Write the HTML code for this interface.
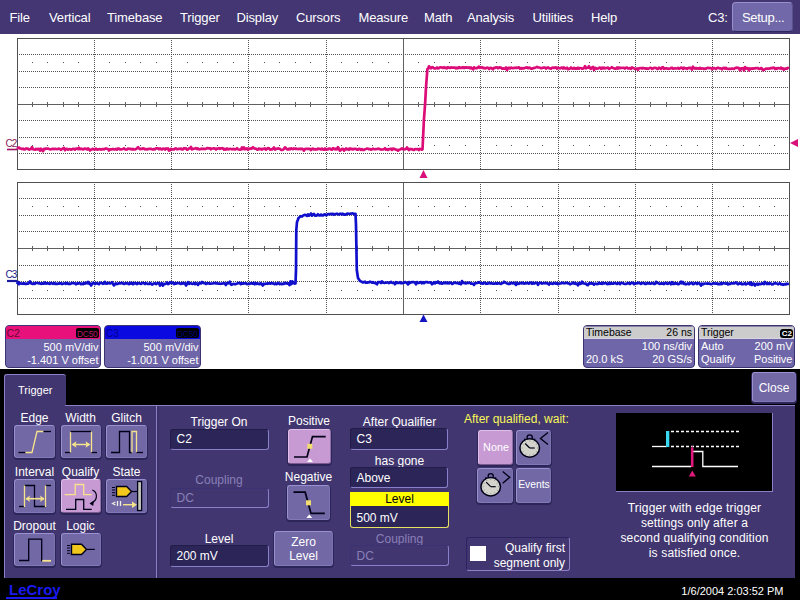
<!DOCTYPE html>
<html><head><meta charset="utf-8">
<style>
*{margin:0;padding:0;box-sizing:border-box}
html,body{width:800px;height:600px;overflow:hidden;background:#fff;font-family:"Liberation Sans", sans-serif;position:relative}
.a{position:absolute}
.t{position:absolute;white-space:nowrap;line-height:1}
.menu{position:absolute;left:0;top:0;width:800px;height:34px;background:#433672}
.mi{position:absolute;top:10px;font-size:13px;color:#fff;line-height:16px;letter-spacing:-0.15px}
.btn{position:absolute;background:#7068a8;border-radius:4px;border:1px solid #9890cc;border-right-color:#5a528e;border-bottom-color:#2e2860}
.info{position:absolute;background:#6e66a8;border:1px solid #3a3470;border-radius:4px;overflow:hidden}
.hdr{position:absolute;left:0;top:0;right:0;height:13px}
.fld{position:absolute;background:#2b2558;border:1px solid #8880c8;border-top-color:#221c48;border-left-color:#221c48;border-radius:3px}
.dfld{position:absolute;border:1px solid #8880c8;border-top-color:#3a3272;border-left-color:#3a3272;border-radius:3px}
.ib{position:absolute;background:#7268a6;border:1px solid #9a92d0;border-right-color:#7a72b0;border-bottom-color:#8078b8;border-radius:3px;box-shadow:0 1px 0 1px #2c2658}
</style></head><body>
<div class="menu">
<div class="mi" style="left:9.5px">File</div>
<div class="mi" style="left:49px">Vertical</div>
<div class="mi" style="left:107px">Timebase</div>
<div class="mi" style="left:180px">Trigger</div>
<div class="mi" style="left:236.5px">Display</div>
<div class="mi" style="left:296px">Cursors</div>
<div class="mi" style="left:358.5px">Measure</div>
<div class="mi" style="left:424px">Math</div>
<div class="mi" style="left:467px">Analysis</div>
<div class="mi" style="left:532.5px">Utilities</div>
<div class="mi" style="left:591px">Help</div>
<div class="mi" style="left:708px">C3:</div>
<div class="btn" style="left:732px;top:2px;width:61px;height:30px"></div>
<div class="mi" style="left:742px;letter-spacing:-0.3px">Setup...</div>
</div>
<svg width="800" height="325" style="position:absolute;left:0;top:0" shape-rendering="crispEdges">
<line x1="19" y1="54.5" x2="789" y2="54.5" stroke="#505050" stroke-width="1" stroke-dasharray="1 1"/>
<line x1="19" y1="71.5" x2="789" y2="71.5" stroke="#505050" stroke-width="1" stroke-dasharray="1 1"/>
<line x1="19" y1="87.5" x2="789" y2="87.5" stroke="#505050" stroke-width="1" stroke-dasharray="1 1"/>
<line x1="19" y1="120.5" x2="789" y2="120.5" stroke="#505050" stroke-width="1" stroke-dasharray="1 1"/>
<line x1="19" y1="137.5" x2="789" y2="137.5" stroke="#505050" stroke-width="1" stroke-dasharray="1 1"/>
<line x1="19" y1="153.5" x2="789" y2="153.5" stroke="#505050" stroke-width="1" stroke-dasharray="1 1"/>
<line x1="94.5" y1="40" x2="94.5" y2="169" stroke="#505050" stroke-width="1" stroke-dasharray="1 1"/>
<line x1="171.5" y1="40" x2="171.5" y2="169" stroke="#505050" stroke-width="1" stroke-dasharray="1 1"/>
<line x1="248.5" y1="40" x2="248.5" y2="169" stroke="#505050" stroke-width="1" stroke-dasharray="1 1"/>
<line x1="326.5" y1="40" x2="326.5" y2="169" stroke="#505050" stroke-width="1" stroke-dasharray="1 1"/>
<line x1="480.5" y1="40" x2="480.5" y2="169" stroke="#505050" stroke-width="1" stroke-dasharray="1 1"/>
<line x1="558.5" y1="40" x2="558.5" y2="169" stroke="#505050" stroke-width="1" stroke-dasharray="1 1"/>
<line x1="635.5" y1="40" x2="635.5" y2="169" stroke="#505050" stroke-width="1" stroke-dasharray="1 1"/>
<line x1="712.5" y1="40" x2="712.5" y2="169" stroke="#505050" stroke-width="1" stroke-dasharray="1 1"/>
<line x1="17" y1="104.5" x2="789" y2="104.5" stroke="#606060" stroke-width="1"/>
<line x1="403.5" y1="38" x2="403.5" y2="169" stroke="#606060" stroke-width="1"/>
<line x1="32.5" y1="102" x2="32.5" y2="107" stroke="#606060" stroke-width="1"/>
<rect x="32.0" y="62" width="1" height="1" fill="#505050"/>
<rect x="32.0" y="145" width="1" height="1" fill="#505050"/>
<line x1="47.5" y1="102" x2="47.5" y2="107" stroke="#606060" stroke-width="1"/>
<rect x="47.0" y="62" width="1" height="1" fill="#505050"/>
<rect x="47.0" y="145" width="1" height="1" fill="#505050"/>
<line x1="63.5" y1="102" x2="63.5" y2="107" stroke="#606060" stroke-width="1"/>
<rect x="63.0" y="62" width="1" height="1" fill="#505050"/>
<rect x="63.0" y="145" width="1" height="1" fill="#505050"/>
<line x1="78.5" y1="102" x2="78.5" y2="107" stroke="#606060" stroke-width="1"/>
<rect x="78.0" y="62" width="1" height="1" fill="#505050"/>
<rect x="78.0" y="145" width="1" height="1" fill="#505050"/>
<line x1="109.5" y1="102" x2="109.5" y2="107" stroke="#606060" stroke-width="1"/>
<rect x="109.0" y="62" width="1" height="1" fill="#505050"/>
<rect x="109.0" y="145" width="1" height="1" fill="#505050"/>
<line x1="125.5" y1="102" x2="125.5" y2="107" stroke="#606060" stroke-width="1"/>
<rect x="125.0" y="62" width="1" height="1" fill="#505050"/>
<rect x="125.0" y="145" width="1" height="1" fill="#505050"/>
<line x1="140.5" y1="102" x2="140.5" y2="107" stroke="#606060" stroke-width="1"/>
<rect x="140.0" y="62" width="1" height="1" fill="#505050"/>
<rect x="140.0" y="145" width="1" height="1" fill="#505050"/>
<line x1="156.5" y1="102" x2="156.5" y2="107" stroke="#606060" stroke-width="1"/>
<rect x="156.0" y="62" width="1" height="1" fill="#505050"/>
<rect x="156.0" y="145" width="1" height="1" fill="#505050"/>
<line x1="187.5" y1="102" x2="187.5" y2="107" stroke="#606060" stroke-width="1"/>
<rect x="187.0" y="62" width="1" height="1" fill="#505050"/>
<rect x="187.0" y="145" width="1" height="1" fill="#505050"/>
<line x1="202.5" y1="102" x2="202.5" y2="107" stroke="#606060" stroke-width="1"/>
<rect x="202.0" y="62" width="1" height="1" fill="#505050"/>
<rect x="202.0" y="145" width="1" height="1" fill="#505050"/>
<line x1="217.5" y1="102" x2="217.5" y2="107" stroke="#606060" stroke-width="1"/>
<rect x="217.0" y="62" width="1" height="1" fill="#505050"/>
<rect x="217.0" y="145" width="1" height="1" fill="#505050"/>
<line x1="233.5" y1="102" x2="233.5" y2="107" stroke="#606060" stroke-width="1"/>
<rect x="233.0" y="62" width="1" height="1" fill="#505050"/>
<rect x="233.0" y="145" width="1" height="1" fill="#505050"/>
<line x1="264.5" y1="102" x2="264.5" y2="107" stroke="#606060" stroke-width="1"/>
<rect x="264.0" y="62" width="1" height="1" fill="#505050"/>
<rect x="264.0" y="145" width="1" height="1" fill="#505050"/>
<line x1="279.5" y1="102" x2="279.5" y2="107" stroke="#606060" stroke-width="1"/>
<rect x="279.0" y="62" width="1" height="1" fill="#505050"/>
<rect x="279.0" y="145" width="1" height="1" fill="#505050"/>
<line x1="295.5" y1="102" x2="295.5" y2="107" stroke="#606060" stroke-width="1"/>
<rect x="295.0" y="62" width="1" height="1" fill="#505050"/>
<rect x="295.0" y="145" width="1" height="1" fill="#505050"/>
<line x1="310.5" y1="102" x2="310.5" y2="107" stroke="#606060" stroke-width="1"/>
<rect x="310.0" y="62" width="1" height="1" fill="#505050"/>
<rect x="310.0" y="145" width="1" height="1" fill="#505050"/>
<line x1="341.5" y1="102" x2="341.5" y2="107" stroke="#606060" stroke-width="1"/>
<rect x="341.0" y="62" width="1" height="1" fill="#505050"/>
<rect x="341.0" y="145" width="1" height="1" fill="#505050"/>
<line x1="357.5" y1="102" x2="357.5" y2="107" stroke="#606060" stroke-width="1"/>
<rect x="357.0" y="62" width="1" height="1" fill="#505050"/>
<rect x="357.0" y="145" width="1" height="1" fill="#505050"/>
<line x1="372.5" y1="102" x2="372.5" y2="107" stroke="#606060" stroke-width="1"/>
<rect x="372.0" y="62" width="1" height="1" fill="#505050"/>
<rect x="372.0" y="145" width="1" height="1" fill="#505050"/>
<line x1="388.5" y1="102" x2="388.5" y2="107" stroke="#606060" stroke-width="1"/>
<rect x="388.0" y="62" width="1" height="1" fill="#505050"/>
<rect x="388.0" y="145" width="1" height="1" fill="#505050"/>
<line x1="418.5" y1="102" x2="418.5" y2="107" stroke="#606060" stroke-width="1"/>
<rect x="418.0" y="62" width="1" height="1" fill="#505050"/>
<rect x="418.0" y="145" width="1" height="1" fill="#505050"/>
<line x1="434.5" y1="102" x2="434.5" y2="107" stroke="#606060" stroke-width="1"/>
<rect x="434.0" y="62" width="1" height="1" fill="#505050"/>
<rect x="434.0" y="145" width="1" height="1" fill="#505050"/>
<line x1="449.5" y1="102" x2="449.5" y2="107" stroke="#606060" stroke-width="1"/>
<rect x="449.0" y="62" width="1" height="1" fill="#505050"/>
<rect x="449.0" y="145" width="1" height="1" fill="#505050"/>
<line x1="465.5" y1="102" x2="465.5" y2="107" stroke="#606060" stroke-width="1"/>
<rect x="465.0" y="62" width="1" height="1" fill="#505050"/>
<rect x="465.0" y="145" width="1" height="1" fill="#505050"/>
<line x1="496.5" y1="102" x2="496.5" y2="107" stroke="#606060" stroke-width="1"/>
<rect x="496.0" y="62" width="1" height="1" fill="#505050"/>
<rect x="496.0" y="145" width="1" height="1" fill="#505050"/>
<line x1="511.5" y1="102" x2="511.5" y2="107" stroke="#606060" stroke-width="1"/>
<rect x="511.0" y="62" width="1" height="1" fill="#505050"/>
<rect x="511.0" y="145" width="1" height="1" fill="#505050"/>
<line x1="527.5" y1="102" x2="527.5" y2="107" stroke="#606060" stroke-width="1"/>
<rect x="527.0" y="62" width="1" height="1" fill="#505050"/>
<rect x="527.0" y="145" width="1" height="1" fill="#505050"/>
<line x1="542.5" y1="102" x2="542.5" y2="107" stroke="#606060" stroke-width="1"/>
<rect x="542.0" y="62" width="1" height="1" fill="#505050"/>
<rect x="542.0" y="145" width="1" height="1" fill="#505050"/>
<line x1="573.5" y1="102" x2="573.5" y2="107" stroke="#606060" stroke-width="1"/>
<rect x="573.0" y="62" width="1" height="1" fill="#505050"/>
<rect x="573.0" y="145" width="1" height="1" fill="#505050"/>
<line x1="589.5" y1="102" x2="589.5" y2="107" stroke="#606060" stroke-width="1"/>
<rect x="589.0" y="62" width="1" height="1" fill="#505050"/>
<rect x="589.0" y="145" width="1" height="1" fill="#505050"/>
<line x1="604.5" y1="102" x2="604.5" y2="107" stroke="#606060" stroke-width="1"/>
<rect x="604.0" y="62" width="1" height="1" fill="#505050"/>
<rect x="604.0" y="145" width="1" height="1" fill="#505050"/>
<line x1="619.5" y1="102" x2="619.5" y2="107" stroke="#606060" stroke-width="1"/>
<rect x="619.0" y="62" width="1" height="1" fill="#505050"/>
<rect x="619.0" y="145" width="1" height="1" fill="#505050"/>
<line x1="650.5" y1="102" x2="650.5" y2="107" stroke="#606060" stroke-width="1"/>
<rect x="650.0" y="62" width="1" height="1" fill="#505050"/>
<rect x="650.0" y="145" width="1" height="1" fill="#505050"/>
<line x1="666.5" y1="102" x2="666.5" y2="107" stroke="#606060" stroke-width="1"/>
<rect x="666.0" y="62" width="1" height="1" fill="#505050"/>
<rect x="666.0" y="145" width="1" height="1" fill="#505050"/>
<line x1="681.5" y1="102" x2="681.5" y2="107" stroke="#606060" stroke-width="1"/>
<rect x="681.0" y="62" width="1" height="1" fill="#505050"/>
<rect x="681.0" y="145" width="1" height="1" fill="#505050"/>
<line x1="697.5" y1="102" x2="697.5" y2="107" stroke="#606060" stroke-width="1"/>
<rect x="697.0" y="62" width="1" height="1" fill="#505050"/>
<rect x="697.0" y="145" width="1" height="1" fill="#505050"/>
<line x1="728.5" y1="102" x2="728.5" y2="107" stroke="#606060" stroke-width="1"/>
<rect x="728.0" y="62" width="1" height="1" fill="#505050"/>
<rect x="728.0" y="145" width="1" height="1" fill="#505050"/>
<line x1="743.5" y1="102" x2="743.5" y2="107" stroke="#606060" stroke-width="1"/>
<rect x="743.0" y="62" width="1" height="1" fill="#505050"/>
<rect x="743.0" y="145" width="1" height="1" fill="#505050"/>
<line x1="759.5" y1="102" x2="759.5" y2="107" stroke="#606060" stroke-width="1"/>
<rect x="759.0" y="62" width="1" height="1" fill="#505050"/>
<rect x="759.0" y="145" width="1" height="1" fill="#505050"/>
<line x1="774.5" y1="102" x2="774.5" y2="107" stroke="#606060" stroke-width="1"/>
<rect x="774.0" y="62" width="1" height="1" fill="#505050"/>
<rect x="774.0" y="145" width="1" height="1" fill="#505050"/>
<rect x="17.5" y="38.5" width="772" height="131" fill="none" stroke="#505050" stroke-width="1"/>
<line x1="19" y1="198.5" x2="789" y2="198.5" stroke="#505050" stroke-width="1" stroke-dasharray="1 1"/>
<line x1="19" y1="215.5" x2="789" y2="215.5" stroke="#505050" stroke-width="1" stroke-dasharray="1 1"/>
<line x1="19" y1="231.5" x2="789" y2="231.5" stroke="#505050" stroke-width="1" stroke-dasharray="1 1"/>
<line x1="19" y1="265.5" x2="789" y2="265.5" stroke="#505050" stroke-width="1" stroke-dasharray="1 1"/>
<line x1="19" y1="281.5" x2="789" y2="281.5" stroke="#505050" stroke-width="1" stroke-dasharray="1 1"/>
<line x1="19" y1="298.5" x2="789" y2="298.5" stroke="#505050" stroke-width="1" stroke-dasharray="1 1"/>
<line x1="94.5" y1="184" x2="94.5" y2="314" stroke="#505050" stroke-width="1" stroke-dasharray="1 1"/>
<line x1="171.5" y1="184" x2="171.5" y2="314" stroke="#505050" stroke-width="1" stroke-dasharray="1 1"/>
<line x1="248.5" y1="184" x2="248.5" y2="314" stroke="#505050" stroke-width="1" stroke-dasharray="1 1"/>
<line x1="326.5" y1="184" x2="326.5" y2="314" stroke="#505050" stroke-width="1" stroke-dasharray="1 1"/>
<line x1="480.5" y1="184" x2="480.5" y2="314" stroke="#505050" stroke-width="1" stroke-dasharray="1 1"/>
<line x1="558.5" y1="184" x2="558.5" y2="314" stroke="#505050" stroke-width="1" stroke-dasharray="1 1"/>
<line x1="635.5" y1="184" x2="635.5" y2="314" stroke="#505050" stroke-width="1" stroke-dasharray="1 1"/>
<line x1="712.5" y1="184" x2="712.5" y2="314" stroke="#505050" stroke-width="1" stroke-dasharray="1 1"/>
<line x1="17" y1="248.5" x2="789" y2="248.5" stroke="#606060" stroke-width="1"/>
<line x1="403.5" y1="182" x2="403.5" y2="314" stroke="#606060" stroke-width="1"/>
<line x1="32.5" y1="246" x2="32.5" y2="251" stroke="#606060" stroke-width="1"/>
<rect x="32.0" y="206" width="1" height="1" fill="#505050"/>
<rect x="32.0" y="290" width="1" height="1" fill="#505050"/>
<line x1="47.5" y1="246" x2="47.5" y2="251" stroke="#606060" stroke-width="1"/>
<rect x="47.0" y="206" width="1" height="1" fill="#505050"/>
<rect x="47.0" y="290" width="1" height="1" fill="#505050"/>
<line x1="63.5" y1="246" x2="63.5" y2="251" stroke="#606060" stroke-width="1"/>
<rect x="63.0" y="206" width="1" height="1" fill="#505050"/>
<rect x="63.0" y="290" width="1" height="1" fill="#505050"/>
<line x1="78.5" y1="246" x2="78.5" y2="251" stroke="#606060" stroke-width="1"/>
<rect x="78.0" y="206" width="1" height="1" fill="#505050"/>
<rect x="78.0" y="290" width="1" height="1" fill="#505050"/>
<line x1="109.5" y1="246" x2="109.5" y2="251" stroke="#606060" stroke-width="1"/>
<rect x="109.0" y="206" width="1" height="1" fill="#505050"/>
<rect x="109.0" y="290" width="1" height="1" fill="#505050"/>
<line x1="125.5" y1="246" x2="125.5" y2="251" stroke="#606060" stroke-width="1"/>
<rect x="125.0" y="206" width="1" height="1" fill="#505050"/>
<rect x="125.0" y="290" width="1" height="1" fill="#505050"/>
<line x1="140.5" y1="246" x2="140.5" y2="251" stroke="#606060" stroke-width="1"/>
<rect x="140.0" y="206" width="1" height="1" fill="#505050"/>
<rect x="140.0" y="290" width="1" height="1" fill="#505050"/>
<line x1="156.5" y1="246" x2="156.5" y2="251" stroke="#606060" stroke-width="1"/>
<rect x="156.0" y="206" width="1" height="1" fill="#505050"/>
<rect x="156.0" y="290" width="1" height="1" fill="#505050"/>
<line x1="187.5" y1="246" x2="187.5" y2="251" stroke="#606060" stroke-width="1"/>
<rect x="187.0" y="206" width="1" height="1" fill="#505050"/>
<rect x="187.0" y="290" width="1" height="1" fill="#505050"/>
<line x1="202.5" y1="246" x2="202.5" y2="251" stroke="#606060" stroke-width="1"/>
<rect x="202.0" y="206" width="1" height="1" fill="#505050"/>
<rect x="202.0" y="290" width="1" height="1" fill="#505050"/>
<line x1="217.5" y1="246" x2="217.5" y2="251" stroke="#606060" stroke-width="1"/>
<rect x="217.0" y="206" width="1" height="1" fill="#505050"/>
<rect x="217.0" y="290" width="1" height="1" fill="#505050"/>
<line x1="233.5" y1="246" x2="233.5" y2="251" stroke="#606060" stroke-width="1"/>
<rect x="233.0" y="206" width="1" height="1" fill="#505050"/>
<rect x="233.0" y="290" width="1" height="1" fill="#505050"/>
<line x1="264.5" y1="246" x2="264.5" y2="251" stroke="#606060" stroke-width="1"/>
<rect x="264.0" y="206" width="1" height="1" fill="#505050"/>
<rect x="264.0" y="290" width="1" height="1" fill="#505050"/>
<line x1="279.5" y1="246" x2="279.5" y2="251" stroke="#606060" stroke-width="1"/>
<rect x="279.0" y="206" width="1" height="1" fill="#505050"/>
<rect x="279.0" y="290" width="1" height="1" fill="#505050"/>
<line x1="295.5" y1="246" x2="295.5" y2="251" stroke="#606060" stroke-width="1"/>
<rect x="295.0" y="206" width="1" height="1" fill="#505050"/>
<rect x="295.0" y="290" width="1" height="1" fill="#505050"/>
<line x1="310.5" y1="246" x2="310.5" y2="251" stroke="#606060" stroke-width="1"/>
<rect x="310.0" y="206" width="1" height="1" fill="#505050"/>
<rect x="310.0" y="290" width="1" height="1" fill="#505050"/>
<line x1="341.5" y1="246" x2="341.5" y2="251" stroke="#606060" stroke-width="1"/>
<rect x="341.0" y="206" width="1" height="1" fill="#505050"/>
<rect x="341.0" y="290" width="1" height="1" fill="#505050"/>
<line x1="357.5" y1="246" x2="357.5" y2="251" stroke="#606060" stroke-width="1"/>
<rect x="357.0" y="206" width="1" height="1" fill="#505050"/>
<rect x="357.0" y="290" width="1" height="1" fill="#505050"/>
<line x1="372.5" y1="246" x2="372.5" y2="251" stroke="#606060" stroke-width="1"/>
<rect x="372.0" y="206" width="1" height="1" fill="#505050"/>
<rect x="372.0" y="290" width="1" height="1" fill="#505050"/>
<line x1="388.5" y1="246" x2="388.5" y2="251" stroke="#606060" stroke-width="1"/>
<rect x="388.0" y="206" width="1" height="1" fill="#505050"/>
<rect x="388.0" y="290" width="1" height="1" fill="#505050"/>
<line x1="418.5" y1="246" x2="418.5" y2="251" stroke="#606060" stroke-width="1"/>
<rect x="418.0" y="206" width="1" height="1" fill="#505050"/>
<rect x="418.0" y="290" width="1" height="1" fill="#505050"/>
<line x1="434.5" y1="246" x2="434.5" y2="251" stroke="#606060" stroke-width="1"/>
<rect x="434.0" y="206" width="1" height="1" fill="#505050"/>
<rect x="434.0" y="290" width="1" height="1" fill="#505050"/>
<line x1="449.5" y1="246" x2="449.5" y2="251" stroke="#606060" stroke-width="1"/>
<rect x="449.0" y="206" width="1" height="1" fill="#505050"/>
<rect x="449.0" y="290" width="1" height="1" fill="#505050"/>
<line x1="465.5" y1="246" x2="465.5" y2="251" stroke="#606060" stroke-width="1"/>
<rect x="465.0" y="206" width="1" height="1" fill="#505050"/>
<rect x="465.0" y="290" width="1" height="1" fill="#505050"/>
<line x1="496.5" y1="246" x2="496.5" y2="251" stroke="#606060" stroke-width="1"/>
<rect x="496.0" y="206" width="1" height="1" fill="#505050"/>
<rect x="496.0" y="290" width="1" height="1" fill="#505050"/>
<line x1="511.5" y1="246" x2="511.5" y2="251" stroke="#606060" stroke-width="1"/>
<rect x="511.0" y="206" width="1" height="1" fill="#505050"/>
<rect x="511.0" y="290" width="1" height="1" fill="#505050"/>
<line x1="527.5" y1="246" x2="527.5" y2="251" stroke="#606060" stroke-width="1"/>
<rect x="527.0" y="206" width="1" height="1" fill="#505050"/>
<rect x="527.0" y="290" width="1" height="1" fill="#505050"/>
<line x1="542.5" y1="246" x2="542.5" y2="251" stroke="#606060" stroke-width="1"/>
<rect x="542.0" y="206" width="1" height="1" fill="#505050"/>
<rect x="542.0" y="290" width="1" height="1" fill="#505050"/>
<line x1="573.5" y1="246" x2="573.5" y2="251" stroke="#606060" stroke-width="1"/>
<rect x="573.0" y="206" width="1" height="1" fill="#505050"/>
<rect x="573.0" y="290" width="1" height="1" fill="#505050"/>
<line x1="589.5" y1="246" x2="589.5" y2="251" stroke="#606060" stroke-width="1"/>
<rect x="589.0" y="206" width="1" height="1" fill="#505050"/>
<rect x="589.0" y="290" width="1" height="1" fill="#505050"/>
<line x1="604.5" y1="246" x2="604.5" y2="251" stroke="#606060" stroke-width="1"/>
<rect x="604.0" y="206" width="1" height="1" fill="#505050"/>
<rect x="604.0" y="290" width="1" height="1" fill="#505050"/>
<line x1="619.5" y1="246" x2="619.5" y2="251" stroke="#606060" stroke-width="1"/>
<rect x="619.0" y="206" width="1" height="1" fill="#505050"/>
<rect x="619.0" y="290" width="1" height="1" fill="#505050"/>
<line x1="650.5" y1="246" x2="650.5" y2="251" stroke="#606060" stroke-width="1"/>
<rect x="650.0" y="206" width="1" height="1" fill="#505050"/>
<rect x="650.0" y="290" width="1" height="1" fill="#505050"/>
<line x1="666.5" y1="246" x2="666.5" y2="251" stroke="#606060" stroke-width="1"/>
<rect x="666.0" y="206" width="1" height="1" fill="#505050"/>
<rect x="666.0" y="290" width="1" height="1" fill="#505050"/>
<line x1="681.5" y1="246" x2="681.5" y2="251" stroke="#606060" stroke-width="1"/>
<rect x="681.0" y="206" width="1" height="1" fill="#505050"/>
<rect x="681.0" y="290" width="1" height="1" fill="#505050"/>
<line x1="697.5" y1="246" x2="697.5" y2="251" stroke="#606060" stroke-width="1"/>
<rect x="697.0" y="206" width="1" height="1" fill="#505050"/>
<rect x="697.0" y="290" width="1" height="1" fill="#505050"/>
<line x1="728.5" y1="246" x2="728.5" y2="251" stroke="#606060" stroke-width="1"/>
<rect x="728.0" y="206" width="1" height="1" fill="#505050"/>
<rect x="728.0" y="290" width="1" height="1" fill="#505050"/>
<line x1="743.5" y1="246" x2="743.5" y2="251" stroke="#606060" stroke-width="1"/>
<rect x="743.0" y="206" width="1" height="1" fill="#505050"/>
<rect x="743.0" y="290" width="1" height="1" fill="#505050"/>
<line x1="759.5" y1="246" x2="759.5" y2="251" stroke="#606060" stroke-width="1"/>
<rect x="759.0" y="206" width="1" height="1" fill="#505050"/>
<rect x="759.0" y="290" width="1" height="1" fill="#505050"/>
<line x1="774.5" y1="246" x2="774.5" y2="251" stroke="#606060" stroke-width="1"/>
<rect x="774.0" y="206" width="1" height="1" fill="#505050"/>
<rect x="774.0" y="290" width="1" height="1" fill="#505050"/>
<rect x="17.5" y="182.5" width="772" height="132" fill="none" stroke="#505050" stroke-width="1"/>
</svg>
<svg width="800" height="325" style="position:absolute;left:0;top:0">
<polyline points="17.0,149.0 18.0,148.0 19.0,147.6 20.0,148.5 21.0,148.6 22.0,149.1 23.0,148.7 24.0,149.4 25.0,149.3 26.0,148.4 27.0,148.9 28.0,148.6 29.0,149.6 30.0,149.3 31.0,149.0 32.0,147.2 33.0,149.2 34.0,149.5 35.0,149.7 36.0,148.8 37.0,149.5 38.0,148.9 39.0,148.9 40.0,150.7 41.0,148.7 42.0,149.7 43.0,151.2 44.0,148.9 45.0,149.1 46.0,148.5 47.0,148.8 48.0,148.5 49.0,148.9 50.0,149.4 51.0,149.4 52.0,148.9 53.0,148.9 54.0,149.1 55.0,148.8 56.0,149.0 57.0,149.1 58.0,149.0 59.0,148.6 60.0,149.2 61.0,149.8 62.0,148.9 63.0,148.5 64.0,147.9 65.0,150.2 66.0,149.1 67.0,148.8 68.0,149.6 69.0,149.3 70.0,149.0 71.0,149.7 72.0,149.2 73.0,148.9 74.0,148.9 75.0,149.7 76.0,148.5 77.0,148.5 78.0,149.1 79.0,147.8 80.0,149.2 81.0,148.7 82.0,148.9 83.0,149.5 84.0,149.0 85.0,148.5 86.0,148.8 87.0,149.5 88.0,148.4 89.0,149.1 90.0,150.5 91.0,149.7 92.0,149.3 93.0,148.8 94.0,149.4 95.0,149.4 96.0,148.6 97.0,149.7 98.0,149.4 99.0,149.3 100.0,149.0 101.0,149.7 102.0,149.0 103.0,149.1 104.0,149.4 105.0,148.8 106.0,148.4 107.0,148.9 108.0,149.0 109.0,150.5 110.0,149.4 111.0,149.2 112.0,149.4 113.0,148.9 114.0,149.4 115.0,149.4 116.0,148.8 117.0,149.6 118.0,148.5 119.0,148.5 120.0,149.4 121.0,149.4 122.0,149.2 123.0,149.0 124.0,148.3 125.0,149.2 126.0,149.6 127.0,149.5 128.0,148.5 129.0,148.7 130.0,149.1 131.0,148.8 132.0,149.5 133.0,148.9 134.0,149.5 135.0,149.5 136.0,149.0 137.0,148.3 138.0,147.1 139.0,148.5 140.0,149.2 141.0,148.7 142.0,149.0 143.0,148.4 144.0,148.6 145.0,149.3 146.0,149.0 147.0,149.5 148.0,149.1 149.0,148.9 150.0,148.8 151.0,148.9 152.0,149.2 153.0,149.5 154.0,149.0 155.0,149.4 156.0,148.4 157.0,148.3 158.0,148.3 159.0,149.3 160.0,148.4 161.0,149.1 162.0,149.4 163.0,148.5 164.0,148.7 165.0,149.6 166.0,148.4 167.0,148.9 168.0,148.4 169.0,150.6 170.0,150.2 171.0,148.9 172.0,149.5 173.0,149.4 174.0,149.4 175.0,148.5 176.0,148.4 177.0,149.3 178.0,149.1 179.0,148.7 180.0,148.9 181.0,148.6 182.0,149.3 183.0,149.4 184.0,148.2 185.0,148.5 186.0,148.4 187.0,149.7 188.0,149.4 189.0,148.3 190.0,148.5 191.0,146.9 192.0,149.4 193.0,148.9 194.0,148.7 195.0,148.5 196.0,148.1 197.0,149.1 198.0,148.4 199.0,149.4 200.0,149.2 201.0,148.8 202.0,148.7 203.0,149.1 204.0,148.6 205.0,149.1 206.0,148.7 207.0,148.2 208.0,148.2 209.0,148.5 210.0,148.2 211.0,149.3 212.0,148.5 213.0,148.5 214.0,148.3 215.0,148.5 216.0,149.5 217.0,148.5 218.0,148.6 219.0,148.1 220.0,148.8 221.0,148.4 222.0,148.2 223.0,148.3 224.0,149.6 225.0,149.0 226.0,149.5 227.0,148.4 228.0,149.3 229.0,149.2 230.0,148.9 231.0,149.0 232.0,149.3 233.0,148.9 234.0,149.1 235.0,149.4 236.0,149.0 237.0,148.2 238.0,149.3 239.0,149.5 240.0,149.7 241.0,149.5 242.0,147.4 243.0,149.1 244.0,147.5 245.0,149.2 246.0,148.9 247.0,148.3 248.0,149.9 249.0,148.5 250.0,148.5 251.0,148.8 252.0,148.3 253.0,147.2 254.0,148.3 255.0,148.6 256.0,148.6 257.0,149.6 258.0,149.6 259.0,148.5 260.0,149.2 261.0,148.9 262.0,149.6 263.0,148.7 264.0,148.9 265.0,148.3 266.0,149.6 267.0,148.8 268.0,148.1 269.0,148.4 270.0,149.6 271.0,149.4 272.0,149.5 273.0,148.6 274.0,147.5 275.0,149.6 276.0,148.8 277.0,148.8 278.0,148.4 279.0,148.7 280.0,148.8 281.0,149.9 282.0,150.0 283.0,149.7 284.0,148.8 285.0,147.3 286.0,148.3 287.0,149.2 288.0,149.6 289.0,148.7 290.0,149.4 291.0,148.3 292.0,148.8 293.0,149.1 294.0,148.4 295.0,148.9 296.0,148.5 297.0,149.0 298.0,149.1 299.0,148.9 300.0,148.7 301.0,149.2 302.0,148.6 303.0,149.2 304.0,150.6 305.0,149.1 306.0,148.8 307.0,148.9 308.0,148.7 309.0,149.1 310.0,148.9 311.0,150.0 312.0,148.9 313.0,148.6 314.0,149.4 315.0,149.2 316.0,149.3 317.0,149.5 318.0,148.5 319.0,148.9 320.0,149.0 321.0,149.5 322.0,148.6 323.0,149.4 324.0,149.7 325.0,148.5 326.0,149.7 327.0,149.0 328.0,149.5 329.0,148.6 330.0,148.6 331.0,149.4 332.0,149.7 333.0,148.1 334.0,148.7 335.0,149.3 336.0,148.6 337.0,149.3 338.0,147.2 339.0,149.0 340.0,150.7 341.0,149.8 342.0,148.9 343.0,148.8 344.0,150.6 345.0,149.4 346.0,148.5 347.0,149.4 348.0,148.8 349.0,149.8 350.0,148.5 351.0,149.1 352.0,148.8 353.0,149.5 354.0,148.8 355.0,148.9 356.0,148.8 357.0,149.6 358.0,149.8 359.0,148.8 360.0,149.1 361.0,149.8 362.0,149.1 363.0,149.9 364.0,150.0 365.0,149.2 366.0,149.0 367.0,148.6 368.0,148.8 369.0,149.3 370.0,149.0 371.0,149.7 372.0,149.2 373.0,148.7 374.0,149.1 375.0,149.3 376.0,149.1 377.0,149.0 378.0,148.7 379.0,148.8 380.0,149.2 381.0,149.6 382.0,149.5 383.0,149.5 384.0,149.1 385.0,148.3 386.0,149.6 387.0,149.1 388.0,149.9 389.0,149.0 390.0,149.1 391.0,148.6 392.0,149.9 393.0,148.5 394.0,148.8 395.0,149.3 396.0,149.7 397.0,149.8 398.0,150.7 399.0,149.8 400.0,149.5 401.0,149.1 402.0,148.3 403.0,149.2 404.0,149.2 405.0,149.3 406.0,148.9 407.0,147.4 408.0,149.0 409.0,150.1 410.0,148.9 411.0,149.3 412.0,149.0 413.0,149.8 414.0,149.8 415.0,149.1 415.9,149.1 416.9,149.3 417.8,149.1 418.8,150.0 419.7,148.9 420.6,149.1 421.6,149.7 422.5,149.5 423.9,120.0 425.1,104.0 426.0,87.4 427.4,69.0 428.2,68.4 429.0,66.3 430.0,67.8 431.0,68.3 432.0,67.2 433.0,67.3 434.0,68.5 435.0,68.4 436.0,68.3 437.0,67.5 438.0,68.4 439.0,68.0 440.0,67.4 441.0,67.3 442.0,67.5 443.0,68.0 444.0,67.2 445.0,68.1 446.0,67.6 447.0,68.3 448.0,67.2 449.0,67.7 450.0,68.0 451.0,67.4 452.0,67.7 453.0,67.6 454.0,67.6 455.0,67.7 456.0,68.4 457.0,67.7 458.0,68.2 459.0,67.2 460.0,67.8 461.0,67.7 462.0,67.8 463.0,67.2 464.0,68.1 465.0,67.3 466.0,67.7 467.0,67.4 468.0,67.9 469.0,67.3 470.0,68.3 471.0,67.5 472.0,68.5 473.0,69.3 474.0,67.3 475.0,68.2 476.0,68.1 477.0,68.1 478.0,67.5 479.0,66.6 480.0,67.8 481.0,67.6 482.0,67.1 483.0,68.2 484.0,67.8 485.0,68.4 486.0,68.1 487.0,67.6 488.0,67.8 489.0,68.9 490.0,67.9 491.0,68.1 492.0,68.4 493.0,69.2 494.0,67.9 495.0,67.9 496.0,67.3 497.0,67.4 498.0,68.4 499.0,67.3 500.0,67.8 501.0,67.5 502.0,68.7 503.0,68.4 504.0,68.6 505.0,68.6 506.0,67.5 507.0,70.0 508.0,68.1 509.0,67.7 510.0,68.6 511.0,67.6 512.0,68.0 513.0,68.2 514.0,67.8 515.0,67.9 516.0,67.7 517.0,67.8 518.0,67.7 519.0,67.4 520.0,68.7 521.0,68.0 522.0,68.6 523.0,68.1 524.0,68.4 525.0,67.9 526.0,67.5 527.0,67.4 528.0,68.2 529.0,67.7 530.0,67.8 531.0,68.6 532.0,68.6 533.0,68.4 534.0,67.8 535.0,67.9 536.0,67.4 537.0,66.8 538.0,67.4 539.0,67.5 540.0,67.7 541.0,68.2 542.0,68.2 543.0,67.6 544.0,67.7 545.0,67.5 546.0,68.6 547.0,67.9 548.0,67.4 549.0,68.2 550.0,68.3 551.0,68.7 552.0,67.7 553.0,67.5 554.0,68.0 555.0,67.5 556.0,67.4 557.0,68.7 558.0,67.7 559.0,68.1 560.0,68.5 561.0,67.8 562.0,67.5 563.0,68.5 564.0,67.4 565.0,68.5 566.0,68.5 567.0,67.7 568.0,69.2 569.0,68.7 570.0,68.7 571.0,67.5 572.0,68.4 573.0,68.7 574.0,67.9 575.0,68.7 576.0,68.2 577.0,68.7 578.0,67.7 579.0,68.7 580.0,68.0 581.0,68.0 582.0,68.7 583.0,68.6 584.0,68.1 585.0,66.1 586.0,68.3 587.0,67.8 588.0,67.6 589.0,66.3 590.0,68.3 591.0,68.8 592.0,67.5 593.0,67.0 594.0,69.9 595.0,67.8 596.0,68.2 597.0,68.7 598.0,68.5 599.0,67.8 600.0,67.5 601.0,68.8 602.0,67.6 603.0,68.4 604.0,67.7 605.0,68.4 606.0,68.0 607.0,68.0 608.0,67.6 609.0,68.8 610.0,68.4 611.0,67.9 612.0,67.2 613.0,68.0 614.0,68.3 615.0,68.7 616.0,68.7 617.0,67.5 618.0,68.6 619.0,67.5 620.0,68.2 621.0,67.8 622.0,68.0 623.0,67.9 624.0,67.9 625.0,68.5 626.0,67.7 627.0,67.6 628.0,68.5 629.0,68.4 630.0,68.1 631.0,68.8 632.0,67.4 633.0,68.0 634.0,68.3 635.0,68.9 636.0,68.9 637.0,68.4 638.0,69.8 639.0,68.3 640.0,68.2 641.0,68.0 642.0,68.5 643.0,67.9 644.0,68.4 645.0,68.3 646.0,68.6 647.0,68.4 648.0,68.9 649.0,68.4 650.0,67.9 651.0,67.9 652.0,68.9 653.0,68.5 654.0,67.8 655.0,68.0 656.0,67.9 657.0,68.8 658.0,68.8 659.0,67.6 660.0,68.2 661.0,68.9 662.0,67.6 663.0,67.2 664.0,68.8 665.0,68.4 666.0,68.2 667.0,68.6 668.0,68.7 669.0,68.8 670.0,68.5 671.0,68.0 672.0,67.7 673.0,68.7 674.0,68.5 675.0,68.2 676.0,68.5 677.0,68.5 678.0,67.8 679.0,68.7 680.0,68.3 681.0,67.6 682.0,67.8 683.0,68.9 684.0,67.7 685.0,68.3 686.0,68.3 687.0,68.8 688.0,68.2 689.0,67.9 690.0,68.1 691.0,67.8 692.0,69.5 693.0,66.7 694.0,68.2 695.0,68.6 696.0,68.0 697.0,68.6 698.0,68.3 699.0,68.7 700.0,67.9 701.0,68.7 702.0,68.5 703.0,68.4 704.0,69.0 705.0,68.5 706.0,68.8 707.0,68.0 708.0,67.8 709.0,68.1 710.0,68.0 711.0,68.0 712.0,69.3 713.0,68.1 714.0,68.1 715.0,68.5 716.0,68.9 717.0,68.0 718.0,67.7 719.0,68.1 720.0,68.4 721.0,68.4 722.0,69.3 723.0,68.0 724.0,67.8 725.0,68.7 726.0,67.8 727.0,68.7 728.0,68.9 729.0,68.7 730.0,68.9 731.0,68.8 732.0,68.6 733.0,68.7 734.0,68.9 735.0,68.0 736.0,67.8 737.0,67.7 738.0,67.8 739.0,68.3 740.0,70.3 741.0,68.3 742.0,68.6 743.0,68.2 744.0,70.4 745.0,67.1 746.0,68.6 747.0,68.1 748.0,68.4 749.0,70.3 750.0,68.5 751.0,68.9 752.0,68.3 753.0,68.7 754.0,68.3 755.0,68.4 756.0,68.1 757.0,68.2 758.0,68.0 759.0,69.0 760.0,68.8 761.0,68.1 762.0,68.5 763.0,70.2 764.0,69.8 765.0,69.2 766.0,68.5 767.0,68.8 768.0,68.5 769.0,68.6 770.0,68.5 771.0,68.0 772.0,68.3 773.0,67.8 774.0,67.7 775.0,69.0 776.0,68.2 777.0,68.8 778.0,68.0 779.0,68.3 780.0,68.3 781.0,67.6 782.0,68.8 783.0,68.3 784.0,69.7 785.0,68.5 786.0,68.6 787.0,68.8 788.0,67.8 789.0,68.4" fill="none" stroke="#dc0c78" stroke-width="2.7" stroke-linejoin="round"/>
<polyline points="17.0,284.1 18.0,282.0 19.0,284.2 20.0,283.1 21.0,283.5 22.0,283.6 23.0,283.8 24.0,283.3 25.0,283.8 26.0,283.9 27.0,283.6 28.0,283.7 29.0,282.7 30.0,281.4 31.0,283.3 32.0,283.6 33.0,284.0 34.0,283.2 35.0,283.8 36.0,283.0 37.0,283.0 38.0,283.0 39.0,283.5 40.0,283.4 41.0,283.9 42.0,283.2 43.0,283.7 44.0,283.6 45.0,282.4 46.0,283.6 47.0,283.4 48.0,283.3 49.0,283.6 50.0,283.9 51.0,282.8 52.0,283.4 53.0,283.9 54.0,282.9 55.0,283.9 56.0,283.6 57.0,284.0 58.0,283.8 59.0,283.3 60.0,283.6 61.0,283.1 62.0,284.1 63.0,283.6 64.0,283.5 65.0,283.2 66.0,283.9 67.0,282.9 68.0,283.9 69.0,283.6 70.0,284.0 71.0,283.5 72.0,283.1 73.0,283.1 74.0,283.3 75.0,283.4 76.0,284.4 77.0,283.3 78.0,283.7 79.0,283.0 80.0,283.3 81.0,284.2 82.0,283.6 83.0,284.1 84.0,282.9 85.0,283.6 86.0,283.0 87.0,283.3 88.0,281.9 89.0,283.6 90.0,283.4 91.0,285.5 92.0,284.1 93.0,282.9 94.0,283.1 95.0,284.1 96.0,283.1 97.0,283.3 98.0,283.8 99.0,284.1 100.0,282.9 101.0,282.8 102.0,283.2 103.0,283.8 104.0,283.5 105.0,281.8 106.0,283.7 107.0,283.6 108.0,282.9 109.0,283.2 110.0,283.5 111.0,283.1 112.0,282.3 113.0,283.9 114.0,285.4 115.0,284.0 116.0,283.4 117.0,284.1 118.0,283.7 119.0,283.3 120.0,283.5 121.0,283.0 122.0,282.9 123.0,283.6 124.0,284.0 125.0,283.4 126.0,283.2 127.0,283.3 128.0,283.5 129.0,284.1 130.0,282.8 131.0,283.6 132.0,283.0 133.0,284.2 134.0,283.2 135.0,283.1 136.0,283.4 137.0,284.0 138.0,283.0 139.0,283.4 140.0,283.5 141.0,283.9 142.0,283.2 143.0,282.9 144.0,283.2 145.0,284.0 146.0,283.1 147.0,283.6 148.0,284.0 149.0,283.9 150.0,283.0 151.0,283.7 152.0,284.6 153.0,284.0 154.0,283.5 155.0,283.2 156.0,284.1 157.0,283.4 158.0,283.0 159.0,283.1 160.0,285.6 161.0,283.6 162.0,283.3 163.0,285.6 164.0,283.8 165.0,284.0 166.0,283.8 167.0,282.5 168.0,284.1 169.0,283.5 170.0,282.2 171.0,283.1 172.0,282.9 173.0,282.5 174.0,284.1 175.0,283.2 176.0,283.7 177.0,283.1 178.0,283.3 179.0,283.1 180.0,283.5 181.0,283.9 182.0,283.0 183.0,283.6 184.0,283.1 185.0,283.4 186.0,285.5 187.0,283.8 188.0,282.2 189.0,283.9 190.0,283.1 191.0,283.4 192.0,283.9 193.0,283.9 194.0,282.9 195.0,284.1 196.0,283.1 197.0,283.7 198.0,284.9 199.0,283.1 200.0,283.1 201.0,283.4 202.0,282.0 203.0,282.8 204.0,283.2 205.0,283.2 206.0,284.1 207.0,283.2 208.0,283.4 209.0,283.2 209.9,283.7 210.9,283.6 211.9,283.5 212.9,283.5 213.9,283.0 214.9,283.0 215.9,283.4 216.9,283.1 217.9,283.6 218.9,283.7 219.9,283.7 220.9,283.8 221.9,283.6 222.9,283.5 223.9,283.1 224.9,283.5 225.9,285.0 226.9,283.0 227.9,283.3 228.8,283.2 229.8,281.7 230.8,284.4 231.8,284.8 232.8,284.0 233.8,283.9 234.8,284.2 235.8,284.1 236.8,283.7 237.8,283.1 238.8,283.2 239.8,282.9 240.8,284.1 241.8,283.2 242.8,283.7 243.8,283.4 244.8,283.4 245.8,283.0 246.8,284.2 247.8,284.0 248.7,283.7 249.7,284.0 250.7,283.2 251.7,283.3 252.7,283.6 253.7,282.8 254.7,284.2 255.7,283.2 256.7,283.9 257.7,283.3 258.7,284.0 259.7,284.2 260.7,283.1 261.7,284.2 262.7,285.5 263.7,283.6 264.7,284.1 265.7,283.6 266.7,283.5 267.6,283.8 268.6,283.3 269.6,283.3 270.6,283.7 271.6,282.9 272.6,283.4 273.6,283.6 274.6,284.2 275.6,283.4 276.6,284.2 277.6,283.5 278.6,283.0 279.6,284.2 280.6,283.5 281.6,284.1 282.6,283.9 283.6,284.0 284.6,283.0 285.6,283.5 286.5,283.1 287.5,283.7 288.5,283.3 289.5,285.1 290.5,281.4 291.5,284.1 292.5,281.5 293.5,283.1 294.5,283.6 295.5,283.5 296.0,270.0 296.3,230.0 297.0,222.0 297.8,220.0 298.5,218.0 299.8,217.0 301.0,216.2 302.0,216.6 303.0,215.6 304.0,215.1 305.0,214.9 306.0,215.0 307.0,215.9 308.0,214.4 309.0,215.6 310.0,214.8 311.0,213.5 312.0,215.7 313.0,214.6 314.0,213.9 315.0,215.6 316.0,215.7 317.0,215.2 318.0,214.3 319.0,215.4 320.0,215.5 321.0,214.6 322.0,215.5 323.0,215.4 324.0,214.6 325.0,214.3 326.0,215.2 327.0,215.0 328.0,214.1 329.0,214.1 330.0,214.2 331.0,213.9 332.0,214.3 332.9,213.8 333.9,214.8 334.9,214.0 335.9,214.0 336.9,213.7 337.8,214.1 338.8,214.5 339.8,213.9 340.8,213.7 341.8,214.6 342.8,213.7 343.7,214.4 344.7,214.7 345.7,214.7 346.7,213.7 347.7,213.5 348.6,213.7 349.6,214.1 350.6,213.6 351.6,213.5 352.6,213.4 353.5,213.9 354.5,214.2 355.5,213.8 356.0,225.0 356.8,270.0 358.0,278.0 359.0,279.5 360.0,281.0 361.0,281.4 362.0,281.9 363.0,282.5 364.0,282.0 365.0,281.7 366.0,282.8 367.0,282.6 368.0,282.4 369.0,282.3 370.0,281.7 371.0,282.0 372.0,282.7 373.0,282.2 374.0,282.8 375.0,282.9 376.0,283.5 377.0,284.3 378.0,282.0 379.0,282.2 380.0,282.0 381.0,283.0 382.0,281.3 383.0,282.6 384.0,282.8 385.0,282.8 386.0,282.6 387.0,282.5 388.0,282.5 389.0,283.1 390.0,282.6 391.0,281.9 392.0,282.7 393.0,283.0 394.0,282.8 395.0,284.2 396.0,282.1 397.0,282.9 398.0,282.8 399.0,282.9 400.0,282.2 401.0,283.2 402.0,283.2 403.0,282.9 404.0,282.7 405.0,282.0 406.0,282.5 407.0,283.2 408.0,284.4 409.0,282.1 410.0,283.0 411.0,282.3 412.0,282.2 413.0,282.1 414.0,282.1 415.0,282.6 416.0,284.3 417.0,282.1 418.0,282.9 419.0,283.0 420.0,282.3 421.0,282.1 422.0,283.3 423.0,282.2 424.0,283.2 425.0,282.3 426.0,282.0 427.0,282.1 428.0,282.5 429.0,282.5 430.0,282.3 431.0,282.8 432.0,284.2 433.0,283.4 434.0,282.2 435.0,283.4 436.0,282.2 437.0,282.7 438.0,281.5 439.0,283.0 440.0,283.4 441.0,282.5 442.0,283.7 443.0,283.3 444.0,282.4 445.0,283.3 446.0,282.4 447.0,283.3 448.0,282.6 449.0,283.3 450.0,282.7 451.0,282.7 452.0,283.9 453.0,283.5 454.0,282.9 455.0,282.4 456.0,283.0 457.0,283.2 458.0,282.8 459.0,283.8 460.0,282.9 461.0,284.2 462.0,281.1 463.0,283.0 464.0,282.7 465.0,283.2 466.0,283.5 467.0,282.7 468.0,283.1 469.0,282.6 470.0,282.8 471.0,283.7 472.0,283.5 473.0,283.7 474.0,284.9 475.0,283.2 476.0,283.1 477.0,283.0 478.0,282.8 479.0,282.2 480.0,282.7 481.0,283.3 482.0,283.2 483.0,283.7 484.0,282.7 485.0,282.8 486.0,283.8 487.0,283.5 488.0,283.6 489.0,282.7 490.0,283.4 491.0,283.1 492.0,283.4 493.0,283.7 494.0,283.7 495.0,283.6 496.0,283.2 497.0,283.7 498.0,283.4 499.0,283.2 500.0,283.5 501.0,283.9 502.0,283.2 503.0,283.0 504.0,281.7 505.0,282.5 506.0,282.8 507.0,283.5 508.0,283.8 509.0,283.7 510.0,283.8 511.0,282.8 512.0,283.0 513.0,283.5 514.0,282.7 515.0,283.6 516.0,284.9 517.0,282.7 518.0,283.7 519.0,283.8 520.0,282.9 521.0,283.2 522.0,283.4 523.0,282.6 524.0,283.7 525.0,283.3 526.0,283.5 527.0,282.8 528.0,283.3 529.0,283.7 530.0,282.6 531.0,282.8 532.0,283.8 533.0,282.6 534.0,283.7 535.0,283.1 536.0,282.8 537.0,283.1 538.0,284.8 539.0,283.3 540.0,282.8 541.0,282.9 542.0,283.6 543.0,283.2 544.0,283.0 545.0,283.3 546.0,282.9 547.0,283.4 548.0,283.6 549.0,284.5 550.0,283.1 551.0,283.4 552.0,283.6 553.0,283.9 554.0,282.9 555.0,283.4 556.0,283.7 557.0,283.0 558.0,284.2 559.0,283.7 560.0,283.5 561.0,283.4 562.0,282.7 563.0,283.1 564.0,283.3 565.0,283.0 566.0,283.1 567.0,282.6 568.0,283.3 569.0,283.4 570.0,284.3 571.0,283.7 572.0,283.5 573.0,282.6 574.0,283.5 575.0,282.9 576.0,284.0 577.0,283.7 578.0,285.3 579.0,283.1 580.0,283.9 581.0,283.7 582.0,281.6 583.0,283.2 584.0,283.5 585.0,283.6 586.0,283.7 587.0,284.9 588.0,285.1 589.0,283.4 590.0,283.6 591.0,283.0 592.0,283.7 593.0,283.3 594.0,284.6 595.0,283.8 596.0,283.6 597.0,284.1 598.0,284.0 599.0,282.7 600.0,283.6 601.0,283.3 602.0,283.9 603.0,282.7 604.0,283.5 605.0,283.2 606.0,283.2 607.0,283.9 608.0,284.1 609.0,283.0 610.0,283.9 611.0,282.8 612.0,283.6 613.0,283.7 614.0,283.2 615.0,283.1 616.0,283.5 617.0,283.9 618.0,283.0 619.0,283.3 620.0,284.1 621.0,282.9 622.0,283.0 623.0,283.1 624.0,283.8 625.0,284.0 626.0,283.9 627.0,283.3 628.0,283.4 629.0,283.1 630.0,284.0 631.0,283.1 632.0,282.8 633.0,282.8 634.0,284.1 635.0,283.3 636.0,283.3 637.0,283.3 638.0,282.6 639.0,283.2 640.0,283.1 641.0,283.9 642.0,283.2 643.0,283.1 644.0,283.0 645.0,284.0 646.0,283.9 647.0,283.2 648.0,283.5 649.0,283.0 650.0,283.6 651.0,283.6 652.0,283.1 653.0,283.3 654.0,284.0 655.0,284.0 656.0,281.8 657.0,283.0 658.0,283.0 659.0,283.5 660.0,283.9 661.0,283.4 662.0,283.7 663.0,283.4 664.0,284.1 665.0,283.1 666.0,282.9 667.0,283.7 668.0,283.8 669.0,282.9 670.0,282.9 671.0,284.2 672.0,282.2 673.0,283.8 674.0,283.9 675.0,283.0 676.0,283.6 677.0,283.4 678.0,284.2 679.0,283.9 680.0,283.1 681.0,281.6 682.0,283.4 683.0,282.0 684.0,283.8 685.0,283.7 686.0,284.3 687.0,283.9 688.0,283.3 689.0,284.3 690.0,283.4 691.0,283.1 692.0,282.9 693.0,284.2 694.0,283.8 695.0,283.2 696.0,283.1 697.0,284.0 698.0,283.0 699.0,283.4 700.0,283.7 701.0,285.7 702.0,283.6 703.0,284.3 704.0,283.8 705.0,283.5 706.0,283.5 707.0,283.8 708.0,283.4 709.0,283.7 710.0,283.8 711.0,284.2 712.0,284.0 713.0,283.6 714.0,283.1 715.0,283.7 716.0,283.7 717.0,283.3 718.0,284.1 719.0,283.9 720.0,284.2 721.0,283.0 722.0,284.1 723.0,283.1 724.0,283.3 725.0,283.5 726.0,283.7 727.0,283.1 728.0,284.4 729.0,283.6 730.0,284.1 731.0,283.2 732.0,283.5 733.0,283.3 734.0,283.5 735.0,283.0 736.0,282.4 737.0,283.4 738.0,284.3 739.0,283.4 740.0,283.7 741.0,283.1 742.0,284.3 743.0,284.1 744.0,284.0 745.0,283.1 746.0,284.4 747.0,283.9 748.0,283.3 749.0,283.2 750.0,284.4 751.0,282.4 752.0,284.9 753.0,283.6 754.0,283.7 755.0,285.5 756.0,284.3 757.0,283.6 758.0,284.7 759.0,283.7 760.0,284.2 761.0,284.1 762.0,283.1 763.0,283.8 764.0,284.1 765.0,282.0 766.0,283.2 767.0,284.1 768.0,283.1 769.0,284.1 770.0,283.1 771.0,283.6 772.0,284.5 773.0,284.3 774.0,283.5 775.0,283.1 776.0,283.5 777.0,283.5 778.0,284.3 779.0,283.8 780.0,283.2 781.0,284.3 782.0,284.3 783.0,284.8 784.0,284.4 785.0,284.1 786.0,284.4 787.0,283.7 788.0,284.0 789.0,283.8" fill="none" stroke="#1010cc" stroke-width="2.7" stroke-linejoin="round"/>
<line x1="7" y1="149.5" x2="17" y2="149.5" stroke="#a01060" stroke-width="1.6"/>
<line x1="7" y1="281" x2="17" y2="281" stroke="#1a1aa0" stroke-width="2.2"/>
<polygon points="419.5,178 427.5,178 423.5,170" fill="#d8107a"/>
<polygon points="419.5,322 427.5,322 423.5,314.5" fill="#1414c0"/>
<polygon points="790,143 798,139 798,147" fill="#d8107a"/>
<text x="5.5" y="146.8" font-family='"Liberation Sans", sans-serif' font-size="10" letter-spacing="-1" fill="#8a1a5a">C2</text>
<text x="5.5" y="277.5" font-family='"Liberation Sans", sans-serif' font-size="10" letter-spacing="-1" fill="#20208a">C3</text>
</svg>
<div class="info" style="left:5px;top:325px;width:96px;height:43px"><div class="hdr" style="background:#e8107a"></div></div>
<div class="t" style="left:6.5px;top:328.11px;font-size:10.5px;color:#6a0a34;">C2</div>
<div class="a" style="left:76px;top:328px;width:23px;height:10px;background:#000;border-radius:2px"></div>
<div class="t" style="left:-202.5px;width:300px;text-align:right;top:329.80px;font-size:8.5px;color:#b81868;letter-spacing:-0.3px">DC50</div>
<div class="t" style="left:-201.5px;width:300px;text-align:right;top:341.69px;font-size:11px;color:#fff;">500 mV/div</div>
<div class="t" style="left:-201.5px;width:300px;text-align:right;top:354.69px;font-size:11px;color:#fff;">-1.401 V offset</div>
<div class="info" style="left:104px;top:325px;width:97px;height:43px"><div class="hdr" style="background:#0a0ae0"></div></div>
<div class="t" style="left:106px;top:329.04px;font-size:10px;color:#000090;">C3</div>
<div class="a" style="left:176px;top:328px;width:23px;height:10px;background:#000;border-radius:2px"></div>
<div class="t" style="left:-102.5px;width:300px;text-align:right;top:329.80px;font-size:8.5px;color:#000070;letter-spacing:-0.3px">DC50</div>
<div class="t" style="left:-101.5px;width:300px;text-align:right;top:341.69px;font-size:11px;color:#fff;">500 mV/div</div>
<div class="t" style="left:-101.5px;width:300px;text-align:right;top:354.69px;font-size:11px;color:#fff;">-1.001 V offset</div>
<div class="info" style="left:583px;top:325px;width:112px;height:43px"><div class="hdr" style="background:#cccccc;border-top:1px solid #8a82a8;border-bottom:1px solid #d8d4e4"></div></div>
<div class="t" style="left:586px;top:327.11px;font-size:10.5px;color:#000;">Timebase</div>
<div class="t" style="left:392px;width:300px;text-align:right;top:327.11px;font-size:10.5px;color:#000;">26 ns</div>
<div class="t" style="left:392px;width:300px;text-align:right;top:341.19px;font-size:11px;color:#fff;">100 ns/div</div>
<div class="t" style="left:586px;top:354.19px;font-size:11px;color:#fff;">20.0 kS</div>
<div class="t" style="left:392px;width:300px;text-align:right;top:354.19px;font-size:11px;color:#fff;">20 GS/s</div>
<div class="info" style="left:698px;top:325px;width:97px;height:43px"><div class="hdr" style="background:#cccccc;border-top:1px solid #8a82a8;border-bottom:1px solid #d8d4e4"></div></div>
<div class="t" style="left:701px;top:327.11px;font-size:10.5px;color:#000;">Trigger</div>
<div class="a" style="left:780px;top:329px;width:13px;height:9px;background:#000;border-radius:3px"></div>
<div class="t" style="left:492px;width:300px;text-align:right;top:330.23px;font-size:8px;color:#fff;font-weight:bold">C2</div>
<div class="t" style="left:701px;top:341.19px;font-size:11px;color:#fff;">Auto</div>
<div class="t" style="left:492.5px;width:300px;text-align:right;top:341.19px;font-size:11px;color:#fff;">200 mV</div>
<div class="t" style="left:701px;top:353.69px;font-size:11px;color:#fff;">Qualify</div>
<div class="t" style="left:492.5px;width:300px;text-align:right;top:353.69px;font-size:11px;color:#fff;">Positive</div>
<div class="a" style="left:0;top:369px;width:800px;height:231px;background:#000"></div>
<div class="a" style="left:4px;top:374px;width:62px;height:40px;background:#423670;border-top:1px solid #8a82c4;border-left:1px solid #8a82c4;border-radius:3px 3px 0 0"></div>
<div class="a" style="left:4px;top:405px;width:791px;height:173px;background:#423670;border-top:1px solid #8a82c4;border-left:1px solid #8a82c4"></div>
<div class="a" style="left:5px;top:405px;width:60px;height:4px;background:#423670"></div>
<div class="t" style="left:18px;top:384.69px;font-size:11px;color:#fff;">Trigger</div>
<div class="ib" style="left:752px;top:372px;width:44px;height:30px;"></div>
<div class="t" style="left:624px;width:300px;text-align:center;top:381.84px;font-size:12px;color:#fff;">Close</div>
<div class="a" style="left:156px;top:406px;width:1px;height:172px;background:#8a82c4"></div>
<div class="a" style="left:157px;top:406px;width:2px;height:172px;background:#3a306a"></div>
<div class="t" style="left:-115.5px;width:300px;text-align:center;top:411.84px;font-size:12px;color:#fff;">Edge</div>
<div class="t" style="left:-69.5px;width:300px;text-align:center;top:411.84px;font-size:12px;color:#fff;">Width</div>
<div class="t" style="left:-23.5px;width:300px;text-align:center;top:411.84px;font-size:12px;color:#fff;">Glitch</div>
<div class="t" style="left:-115.5px;width:300px;text-align:center;top:466.34px;font-size:12px;color:#fff;">Interval</div>
<div class="t" style="left:-69.5px;width:300px;text-align:center;top:466.34px;font-size:12px;color:#fff;">Qualify</div>
<div class="t" style="left:-23.5px;width:300px;text-align:center;top:466.34px;font-size:12px;color:#fff;">State</div>
<div class="t" style="left:-115.5px;width:300px;text-align:center;top:520.34px;font-size:12px;color:#fff;">Dropout</div>
<div class="t" style="left:-69.5px;width:300px;text-align:center;top:520.34px;font-size:12px;color:#fff;">Logic</div>
<div class="ib" style="left:14px;top:425px;width:41px;height:33px;"></div>
<div class="ib" style="left:61px;top:425px;width:40px;height:33px;"></div>
<div class="ib" style="left:106px;top:425px;width:41px;height:33px;"></div>
<div class="ib" style="left:14px;top:479px;width:41px;height:34px;"></div>
<div class="ib" style="left:61px;top:479px;width:40px;height:34px;background:#c89ad4;border-color:#e0c0e8 #9070a8 #7a5a90 #e0c0e8;"></div>
<div class="ib" style="left:106px;top:479px;width:41px;height:34px;"></div>
<div class="ib" style="left:14px;top:533px;width:41px;height:33px;"></div>
<div class="ib" style="left:61px;top:533px;width:40px;height:33px;"></div>
<div class="t" style="left:69px;width:300px;text-align:center;top:415.84px;font-size:12px;color:#fff;">Trigger On</div>
<div class="fld" style="left:170px;top:429px;width:99px;height:21px;"></div>
<div class="t" style="left:176.5px;top:432.84px;font-size:12px;color:#fff;">C2</div>
<div class="t" style="left:69px;width:300px;text-align:center;top:474.34px;font-size:12px;color:#8880b8;">Coupling</div>
<div class="dfld" style="left:170px;top:488px;width:99px;height:20px;"></div>
<div class="t" style="left:176.5px;top:491.84px;font-size:12px;color:#8880b8;">DC</div>
<div class="t" style="left:69px;width:300px;text-align:center;top:532.84px;font-size:12px;color:#fff;">Level</div>
<div class="fld" style="left:170px;top:545px;width:99px;height:22px;"></div>
<div class="t" style="left:176.5px;top:549.84px;font-size:12px;color:#fff;">200 mV</div>
<div class="t" style="left:159px;width:300px;text-align:center;top:414.84px;font-size:12px;color:#fff;">Positive</div>
<div class="ib" style="left:288px;top:429px;width:43px;height:35px;background:#c89ad4;border-color:#e0c0e8 #9070a8 #7a5a90 #e0c0e8;"></div>
<div class="t" style="left:158.5px;width:300px;text-align:center;top:470.84px;font-size:12px;color:#fff;">Negative</div>
<div class="ib" style="left:287px;top:485px;width:43px;height:35px;"></div>
<div class="ib" style="left:274px;top:531px;width:59px;height:35px;"></div>
<div class="t" style="left:153.5px;width:300px;text-align:center;top:535.84px;font-size:12px;color:#fff;">Zero</div>
<div class="t" style="left:153.5px;width:300px;text-align:center;top:550.34px;font-size:12px;color:#fff;">Level</div>
<div class="t" style="left:249.5px;width:300px;text-align:center;top:415.84px;font-size:12px;color:#fff;">After Qualifier</div>
<div class="fld" style="left:350px;top:428px;width:98px;height:22px;"></div>
<div class="t" style="left:356.5px;top:432.84px;font-size:12px;color:#fff;">C3</div>
<div class="t" style="left:249.5px;width:300px;text-align:center;top:454.84px;font-size:12px;color:#fff;">has gone</div>
<div class="fld" style="left:350px;top:467px;width:98px;height:21px;"></div>
<div class="t" style="left:356.5px;top:471.84px;font-size:12px;color:#fff;">Above</div>
<div class="a" style="left:350px;top:492px;width:99px;height:36px;background:#2b2558;border:1px solid #e8e060;border-top:none;border-radius:0 0 3px 3px"></div>
<div class="a" style="left:350px;top:492px;width:99px;height:14px;background:#ffff00"></div>
<div class="t" style="left:249.5px;width:300px;text-align:center;top:493.34px;font-size:12px;color:#000;">Level</div>
<div class="t" style="left:356.5px;top:511.84px;font-size:12px;color:#fff;">500 mV</div>
<div class="t" style="left:249.5px;width:300px;text-align:center;top:532.84px;font-size:12px;color:#8880b8;">Coupling</div>
<div class="dfld" style="left:350px;top:545px;width:99px;height:21px;"></div>
<div class="t" style="left:356.5px;top:549.84px;font-size:12px;color:#8880b8;">DC</div>
<div class="t" style="left:464px;top:413.14px;font-size:12px;color:#f8f858;">After qualified, wait:</div>
<div class="ib" style="left:478px;top:430px;width:35px;height:35px;background:#c89ad4;border-color:#e0c0e8 #9070a8 #7a5a90 #e0c0e8;"></div>
<div class="t" style="left:346px;width:300px;text-align:center;top:442.36px;font-size:10.8px;color:#fff;">None</div>
<div class="ib" style="left:516px;top:430px;width:35px;height:35px;"></div>
<div class="ib" style="left:477px;top:468px;width:36px;height:35px;"></div>
<div class="ib" style="left:516px;top:468px;width:35px;height:35px;"></div>
<div class="t" style="left:384px;width:300px;text-align:center;top:480.28px;font-size:10.3px;color:#fff;">Events</div>
<div class="a" style="left:466px;top:537px;width:104px;height:34px;border:1px solid #8a82c4;border-top-color:#2c2460;border-left-color:#2c2460;border-radius:3px"></div>
<div class="a" style="left:470px;top:546px;width:16px;height:15px;background:#fff"></div>
<div class="t" style="left:265px;width:300px;text-align:right;top:541.84px;font-size:12px;color:#fff;">Qualify first</div>
<div class="t" style="left:265px;width:300px;text-align:right;top:556.84px;font-size:12px;color:#fff;">segment only</div>
<div class="a" style="left:616px;top:413px;width:157px;height:79px;background:#000;border-right:1px solid #8a82c4;border-bottom:1px solid #8a82c4"></div>
<div class="t" style="left:544.5px;width:300px;text-align:center;top:501.84px;font-size:12px;color:#fff;letter-spacing:0.15px">Trigger with edge trigger</div>
<div class="t" style="left:544.5px;width:300px;text-align:center;top:516.84px;font-size:12px;color:#fff;letter-spacing:0.15px">settings only after a</div>
<div class="t" style="left:544.5px;width:300px;text-align:center;top:531.84px;font-size:12px;color:#fff;letter-spacing:0.15px">second qualifying condition</div>
<div class="t" style="left:544.5px;width:300px;text-align:center;top:546.84px;font-size:12px;color:#fff;letter-spacing:0.15px">is satisfied once.</div>
<div class="t" style="left:9px;top:582.30px;font-size:15px;color:#1a1af0;font-weight:bold">LeCroy</div>
<div class="a" style="left:6px;top:597px;width:51px;height:1.5px;background:#1a1af0"></div>
<div class="t" style="left:483.5px;width:300px;text-align:right;top:586.19px;font-size:11px;color:#fff;">1/6/2004 2:03:52 PM</div>
<svg width="800" height="600" style="position:absolute;left:0;top:0">
<g fill="none" stroke-width="1.3">
<!-- Edge -->
<polyline points="18.5,452.5 25.5,452.5" stroke="#000018"/>
<polyline points="25.5,452.5 32,452.5 37,431.5 43.5,431.5" stroke="#f6e48a"/>
<polyline points="43.5,431.5 51,431.5" stroke="#000018"/>
<!-- Width -->
<polyline points="65,452.5 70.5,452.5" stroke="#000018"/>
<polyline points="70.5,452.5 70.5,431.5" stroke="#f6e48a"/>
<polyline points="70.5,431.5 91.5,431.5" stroke="#000018"/>
<polyline points="91.5,431.5 91.5,452.5" stroke="#f6e48a"/>
<polyline points="91.5,452.5 97,452.5" stroke="#000018"/>
<polyline points="74,444.5 88,444.5" stroke="#f6e48a" stroke-width="1.5"/>
<polygon points="71.5,444.5 76.5,441.3 75.5,444.5 76.5,447.7" fill="#f6e48a" stroke="none"/>
<polygon points="90.5,444.5 85.5,441.3 86.5,444.5 85.5,447.7" fill="#f6e48a" stroke="none"/>
<!-- Glitch -->
<polyline points="111,452.5 119.5,452.5 119.5,431.5 129.5,431.5 129.5,452.5 132,452.5" stroke="#000018"/>
<polyline points="132,452.5 132,431.5 136.5,431.5 136.5,452.5" stroke="#f6e48a"/>
<polyline points="136.5,452.5 143,452.5" stroke="#000018"/>
<!-- Interval -->
<polyline points="19,506.5 24.5,506.5" stroke="#000018"/>
<polyline points="24.5,485.5 34.5,485.5 34.5,506.5 45.5,506.5" stroke="#000018"/>
<polyline points="45.5,485.5 51,485.5" stroke="#000018"/>
<polyline points="24.5,485.5 24.5,507" stroke="#f6e48a"/>
<polyline points="45.5,485.5 45.5,507" stroke="#f6e48a"/>
<polyline points="26,498.7 44,498.7" stroke="#f6e48a" stroke-width="1.6"/>
<polygon points="25.5,498.7 30,495.5 29,498.7 30,502" fill="#f6e48a" stroke="none"/>
<polygon points="44.5,498.7 40,495.5 41,498.7 40,502" fill="#f6e48a" stroke="none"/>
<!-- Qualify -->
<polyline points="64.7,494.7 75.2,494.7 75.2,484.5 83.7,484.5 83.7,494.7 91.7,494.7" stroke="#f6e48a"/>
<polyline points="66,509.3 75.7,509.3 75.7,499.5 83.7,499.5 83.7,509.3 91.7,509.3" stroke="#000018"/>
<path d="M92.3,490 C97.5,492 98.5,500.5 91,503.3" stroke="#000018" stroke-width="1.2"/>
<polygon points="89.5,503.5 94,500.5 93.2,506" fill="#000018" stroke="none"/>
<!-- Dropout -->
<polyline points="19,560.5 28.7,560.5 28.7,539.2 41.7,539.2 41.7,560.5 42.5,560.5" stroke="#000018"/>
<polyline points="42.2,560.8 51,560.8" stroke="#f6e48a" stroke-width="1.8"/>
</g>
<!-- State -->
<rect x="137.6" y="481.5" width="4" height="29" fill="#c4c4bc" stroke="#000018" stroke-width="1.3"/>
<path d="M116.5,486.5 L126.7,486.5 L131.5,491.5 L126.7,496.5 L116.5,496.5 Z" fill="#f2c81c" stroke="#000018" stroke-width="1.4"/>
<g stroke="#000018" stroke-width="1"><line x1="112" y1="487.5" x2="115" y2="487.5"/><line x1="112" y1="490" x2="115" y2="490"/><line x1="112" y1="492.7" x2="115" y2="492.7"/><line x1="112" y1="495.3" x2="115" y2="495.3"/></g>
<line x1="131.5" y1="491.5" x2="137.5" y2="491.5" stroke="#000018" stroke-width="1.2"/>
<polyline points="115.5,502 112.5,503.5 115.5,505" stroke="#f0f0e0" stroke-width="1.2" fill="none"/>
<line x1="117.5" y1="501" x2="117.5" y2="506" stroke="#f0f0e0" stroke-width="1.3"/>
<line x1="120.5" y1="501" x2="120.5" y2="506" stroke="#f0f0e0" stroke-width="1.3"/>
<polyline points="123,504.7 133,504.7" stroke="#f6e48a" stroke-width="1.4" fill="none"/>
<polygon points="137,504.7 132,501.5 132,508" fill="#f6e48a"/>
<!-- Logic -->
<path d="M71.5,544.3 L81.5,544.3 L86.5,549.4 L81.5,554.5 L71.5,554.5 Z" fill="#f2c81c" stroke="#000018" stroke-width="1.4"/>
<g stroke="#000018" stroke-width="1"><line x1="67" y1="545.5" x2="70" y2="545.5"/><line x1="67" y1="548" x2="70" y2="548"/><line x1="67" y1="550.7" x2="70" y2="550.7"/><line x1="67" y1="553.3" x2="70" y2="553.3"/></g>
<line x1="86.5" y1="549.4" x2="94.8" y2="549.4" stroke="#000018" stroke-width="1.2"/>
<!-- Positive -->
<polyline points="294,457 307,457 312.5,436.6 325.7,436.6" fill="none" stroke="#000018" stroke-width="1.7"/>
<rect x="307.3" y="443.8" width="5" height="5" fill="#f2dc70"/>
<polygon points="307,462 313,462 310,458.5" fill="#fff"/>
<!-- Negative -->
<polyline points="293.5,492.2 305.2,492.2 311,513.4 324.8,513.4" fill="none" stroke="#000018" stroke-width="1.7"/>
<rect x="306" y="500.3" width="5" height="5" fill="#f2dc70"/>
<polygon points="306.3,518 312.3,518 309.3,514.5" fill="#fff"/>
<!-- stopwatch < -->
<g stroke="#000018" stroke-width="1.3">
<circle cx="529.7" cy="437.5" r="2.6" fill="none"/>
<line x1="524.2" y1="438.8" x2="525.7" y2="440.2"/>
<line x1="535.2" y1="438.8" x2="533.7" y2="440.2"/>
<ellipse cx="529.7" cy="448" rx="9.8" ry="9.2" fill="#d4d4cc" stroke-width="1.5"/>
<line x1="536.9" y1="448.0" x2="537.7" y2="448.0" stroke="#707070" stroke-width="0.8"/><line x1="535.9" y1="451.3" x2="536.6" y2="451.7" stroke="#707070" stroke-width="0.8"/><line x1="533.3" y1="453.7" x2="533.7" y2="454.4" stroke="#707070" stroke-width="0.8"/><line x1="529.7" y1="454.6" x2="529.7" y2="455.4" stroke="#707070" stroke-width="0.8"/><line x1="526.1" y1="453.7" x2="525.7" y2="454.4" stroke="#707070" stroke-width="0.8"/><line x1="523.5" y1="451.3" x2="522.8" y2="451.7" stroke="#707070" stroke-width="0.8"/><line x1="522.5" y1="448.0" x2="521.7" y2="448.0" stroke="#707070" stroke-width="0.8"/><line x1="523.5" y1="444.7" x2="522.8" y2="444.3" stroke="#707070" stroke-width="0.8"/><line x1="526.1" y1="442.3" x2="525.7" y2="441.6" stroke="#707070" stroke-width="0.8"/><line x1="529.7" y1="441.4" x2="529.7" y2="440.6" stroke="#707070" stroke-width="0.8"/><line x1="533.3" y1="442.3" x2="533.7" y2="441.6" stroke="#707070" stroke-width="0.8"/><line x1="535.9" y1="444.7" x2="536.6" y2="444.3" stroke="#707070" stroke-width="0.8"/>
<line x1="529.7" y1="448" x2="525.2" y2="443.5" stroke-width="1.2"/>
<line x1="529.7" y1="448" x2="534.7" y2="448" stroke-width="1.2"/>
<polyline points="548,432.5 540.5,438.5 548,444.5" fill="none" stroke-width="1.4"/>
</g>
<g stroke="#000018" stroke-width="1.3">
<circle cx="490.7" cy="476.2" r="2.6" fill="none"/>
<line x1="485.2" y1="477.5" x2="486.7" y2="478.9"/>
<line x1="496.2" y1="477.5" x2="494.7" y2="478.9"/>
<ellipse cx="490.7" cy="486.7" rx="9.8" ry="9.2" fill="#d4d4cc" stroke-width="1.5"/>
<line x1="497.9" y1="486.7" x2="498.7" y2="486.7" stroke="#707070" stroke-width="0.8"/><line x1="496.9" y1="490.0" x2="497.6" y2="490.4" stroke="#707070" stroke-width="0.8"/><line x1="494.3" y1="492.4" x2="494.7" y2="493.1" stroke="#707070" stroke-width="0.8"/><line x1="490.7" y1="493.3" x2="490.7" y2="494.1" stroke="#707070" stroke-width="0.8"/><line x1="487.1" y1="492.4" x2="486.7" y2="493.1" stroke="#707070" stroke-width="0.8"/><line x1="484.5" y1="490.0" x2="483.8" y2="490.4" stroke="#707070" stroke-width="0.8"/><line x1="483.5" y1="486.7" x2="482.7" y2="486.7" stroke="#707070" stroke-width="0.8"/><line x1="484.5" y1="483.4" x2="483.8" y2="483.0" stroke="#707070" stroke-width="0.8"/><line x1="487.1" y1="481.0" x2="486.7" y2="480.3" stroke="#707070" stroke-width="0.8"/><line x1="490.7" y1="480.1" x2="490.7" y2="479.3" stroke="#707070" stroke-width="0.8"/><line x1="494.3" y1="481.0" x2="494.7" y2="480.3" stroke="#707070" stroke-width="0.8"/><line x1="496.9" y1="483.4" x2="497.6" y2="483.0" stroke="#707070" stroke-width="0.8"/>
<line x1="490.7" y1="486.7" x2="486.2" y2="482.2" stroke-width="1.2"/>
<line x1="490.7" y1="486.7" x2="495.7" y2="486.7" stroke-width="1.2"/>
<polyline points="502.7,471.5 509.7,477.3 502.7,483.3" fill="none" stroke-width="1.4"/>
</g>
<!-- preview -->
<g stroke="#fff" stroke-width="1.3" fill="none">
<line x1="652" y1="446.5" x2="667" y2="446.5"/>
<line x1="671" y1="431.5" x2="739" y2="431.5" stroke-dasharray="3 2"/>
<line x1="671" y1="446.5" x2="739" y2="446.5" stroke-dasharray="3 2"/>
<polyline points="652,466.5 691,466.5"/>
<polyline points="693,451.5 702.8,451.5 702.8,466.5 738,466.5"/>
</g>
<rect x="666" y="431" width="3.3" height="16" fill="#38d8f0"/>
<line x1="692.2" y1="446" x2="692.2" y2="450" stroke="#e0187a" stroke-width="1"/>
<rect x="690.9" y="448" width="2.6" height="19" fill="#e0187a"/>
<polygon points="688.8,476.5 695.8,476.5 692.3,470.5" fill="#e0187a"/>
</svg>
</body></html>
